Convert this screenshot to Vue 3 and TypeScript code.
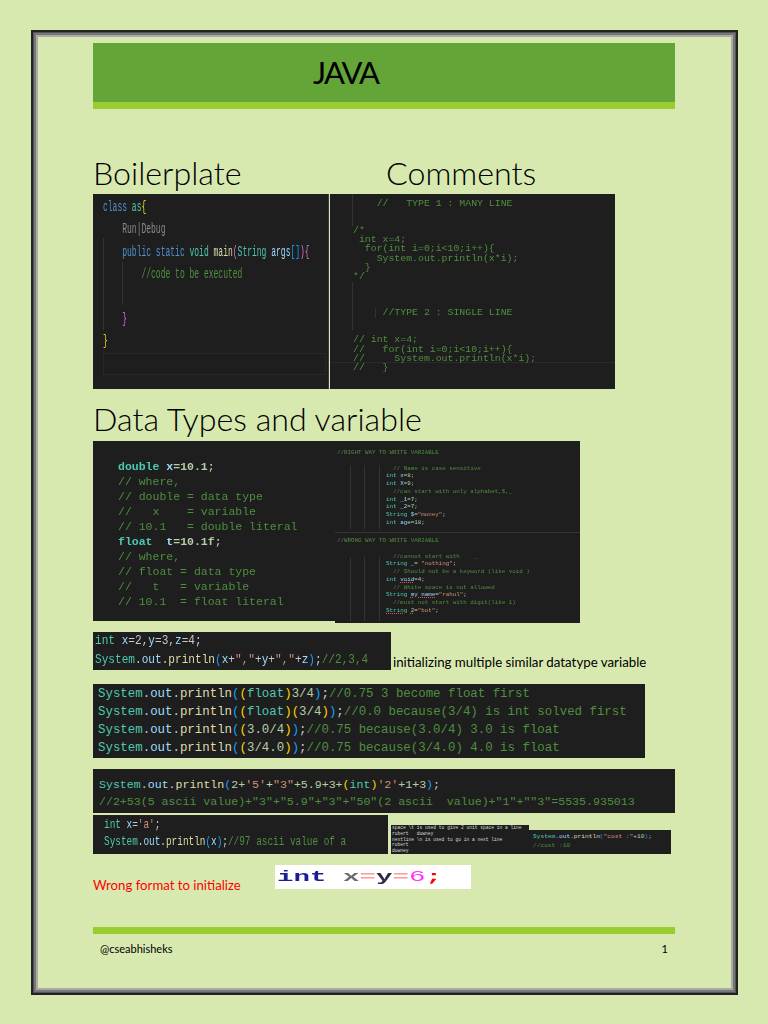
<script setup lang="ts">
type Token = [string, string?]
type Line = Token[]

const c = (text: string): Line => [[text, 'cm']]
const blank: Line = [[' ']]

const boiler: Line[] = [
  [['class', 'kw'], [' '], ['as', 'ty'], ['{', 'gold']],
  [['    '], ['Run|Debug', 'mute']],
  [['    '], ['public static', 'kw'], [' '], ['void', 'ty'], [' '], ['main', 'fn'], ['(', 'pur'], ['String', 'ty'], [' '], ['args', 'var'], ['[]', 'blu'], [')', 'pur'], ['{', 'pur']],
  [['        '], ['//code to be executed', 'cm']],
  blank,
  [['    '], ['}', 'pur']],
  [['}', 'gold']],
]

const comments: string[] = [
  '    //   TYPE 1 : MANY LINE', ' ', ' ',
  '/*', ' int x=4;', '  for(int i=0;i<10;i++){', '    System.out.println(x*i);', '  }', '*/',
  ' ', ' ', ' ',
  '     //TYPE 2 : SINGLE LINE', ' ', ' ',
  '// int x=4;', '//   for(int i=0;i<10;i++){', '//     System.out.println(x*i);', '//   }',
]

const types: Line[] = [
  [['double', 'ty'], [' '], ['x', 'var'], ['=10.1', 'num'], [';', 'fn']],
  c('// where,'),
  c('// double = data type'),
  c('//   x    = variable'),
  c('// 10.1   = double literal'),
  [['float', 'ty'], ['  '], ['t', 'var'], ['=10.1f', 'num'], [';', 'fn']],
  c('// where,'),
  c('// float = data type'),
  c('//   t   = variable'),
  c('// 10.1  = float literal'),
]

const ind = '              '
const right: Line[] = [
  c('//RIGHT WAY TO WRITE VARIABLE'),
  blank,
  c(ind + '  // Name is case sensitive'),
  [[ind], ['int', 'ty'], [' '], ['x', 'var'], ['=8;', 'num']],
  [[ind], ['int', 'ty'], [' '], ['X', 'var'], ['=9;', 'num']],
  c(ind + '  //can start with only alphabet,$,_'),
  [[ind], ['int', 'ty'], [' '], ['_1', 'var'], ['=7;', 'num']],
  [[ind], ['int', 'ty'], [' '], ['_2', 'var'], ['=7;', 'num']],
  [[ind], ['String', 'ty'], [' '], ['$', 'var'], ['='], ['"money"', 'str'], [';']],
  [[ind], ['int', 'ty'], [' '], ['age', 'var'], ['=18;', 'num']],
]

const wrong: Line[] = [
  c('//WRONG WAY TO WRITE VARIABLE'),
  blank,
  c(ind + '  //cannot start with    _'),
  [[ind], ['String', 'ty'], [' '], ['_', 'var'], ['= '], ['"nothing"', 'str'], [';']],
  c(ind + '  // Should not be a keyword (like void )'),
  [[ind], ['int', 'ty'], [' '], ['void', 'var err'], ['=4;', 'num']],
  c(ind + '  // White space is not allowed'),
  [[ind], ['String', 'ty'], [' '], ['my name', 'var err'], ['='], ['"rahul"', 'str'], [';']],
  c(ind + '  //must not start with digit(like 1)'),
  [[ind], ['String', 'ty err'], [' '], ['2', 'num err'], ['='], ['"bot"', 'str'], [';']],
]

const multi: Line[] = [
  [['int', 'ty'], [' '], ['x', 'var'], ['=2,'], ['y', 'var'], ['=3,'], ['z', 'var'], ['=4;']],
  [['System', 'ty'], ['.'], ['out', 'var'], ['.'], ['println', 'fn'], ['(', 'blu'], ['x', 'var'], ['+'], ['","', 'str'], ['+'], ['y', 'var'], ['+'], ['","', 'str'], ['+'], ['z', 'var'], [')', 'blu'], [';'], ['//2,3,4', 'cm']],
]

const pr: Token[] = [['System', 'ty'], ['.'], ['out', 'var'], ['.'], ['println', 'fn'], ['(', 'blu']]
const casts: Line[] = [
  [...pr, ['(', 'gold'], ['float', 'ty'], [')', 'gold'], ['3/4', 'num'], [')', 'blu'], [';'], ['//0.75 3 become float first', 'cm']],
  [...pr, ['(', 'gold'], ['float', 'ty'], [')', 'gold'], ['(', 'gold'], ['3/4', 'num'], [')', 'gold'], [')', 'blu'], [';'], ['//0.0 because(3/4) is int solved first', 'cm']],
  [...pr, ['(', 'gold'], ['3.0/4', 'num'], [')', 'gold'], [')', 'blu'], [';'], ['//0.75 because(3.0/4) 3.0 is float', 'cm']],
  [...pr, ['(', 'gold'], ['3/4.0', 'num'], [')', 'gold'], [')', 'blu'], [';'], ['//0.75 because(3/4.0) 4.0 is float', 'cm']],
]

const ascii: Line[] = [
  [...pr, ['2+', 'num'], ["'5'", 'str'], ['+'], ['"3"', 'str'], ['+5.9+3+', 'num'], ['(', 'gold'], ['int', 'ty'], [')', 'gold'], ["'2'", 'str'], ['+1+3', 'num'], [')', 'blu'], [';']],
  c('//2+53(5 ascii value)+"3"+"5.9"+"3"+"50"(2 ascii  value)+"1"+""3"=5535.935013'),
]

const charShot: Line[] = [
  [['int', 'ty'], [' '], ['x', 'var'], ['='], ["'a'", 'str'], [';']],
  [['System', 'ty'], ['.'], ['out', 'var'], ['.'], ['println', 'fn'], ['(', 'blu'], ['x', 'var'], [')', 'blu'], [';'], ['//97 ascii value of a', 'cm']],
]

const esc: string[] = [
  'space \\t is used to give 2 unit space in a line',
  'robert   downey',
  'nextline \\n is used to go in a next line',
  'robert',
  'downey',
]

const cost: Line[] = [
  [['System', 'ty'], ['.'], ['out', 'var'], ['.'], ['println', 'fn'], ['(', 'blu'], ['"cost :"', 'str'], ['+10', 'num'], [')', 'blu'], [';']],
  c('//cost :10'),
]
</script>

<template>
  <div class="page">
    <div class="frame">
      <header class="title"><h1>JAVA</h1></header>

      <div class="heads">
        <h2>Boilerplate</h2>
        <h2>Comments</h2>
      </div>

      <div class="row row-top">
        <div class="shot boiler">
          <i class="guide g1"></i>
          <i class="guide g2"></i>
          <i class="hl"></i>
          <pre class="code"><span v-for="(l, i) in boiler" :key="i" class="ln"><span v-for="(t, j) in l" :key="j" :class="t[1]">{{ t[0] }}</span></span></pre>
        </div>
        <div class="shot comments">
          <i class="guide c1"></i>
          <i class="guide c2"></i>
          <i class="guide c3"></i>
          <i class="rule"></i>
          <pre class="code"><span v-for="(l, i) in comments" :key="i" class="ln cm">{{ l }}</span></pre>
        </div>
      </div>

      <h2 class="sub">Data Types and variable</h2>

      <div class="row row-types">
        <div class="shot types">
          <pre class="code"><span v-for="(l, i) in types" :key="i" class="ln"><span v-for="(t, j) in l" :key="j" :class="t[1]">{{ t[0] }}</span></span></pre>
        </div>
        <div class="stack">
          <div class="shot tiny t-right">
            <i class="guide t1"></i>
            <i class="guide t2"></i>
            <i class="guide t3"></i>
            <pre class="code"><span v-for="(l, i) in right" :key="i" class="ln"><span v-for="(t, j) in l" :key="j" :class="t[1]">{{ t[0] }}</span></span></pre>
          </div>
          <div class="shot tiny t-wrong">
            <i class="guide t1"></i>
            <i class="guide t2"></i>
            <i class="guide t3"></i>
            <pre class="code"><span v-for="(l, i) in wrong" :key="i" class="ln"><span v-for="(t, j) in l" :key="j" :class="t[1]">{{ t[0] }}</span></span></pre>
          </div>
        </div>
      </div>

      <div class="row row-multi">
        <div class="shot multi">
          <pre class="code"><span v-for="(l, i) in multi" :key="i" class="ln"><span v-for="(t, j) in l" :key="j" :class="t[1]">{{ t[0] }}</span></span></pre>
        </div>
        <span class="note">initializing multiple similar datatype variable</span>
      </div>

      <div class="shot casts">
        <pre class="code"><span v-for="(l, i) in casts" :key="i" class="ln"><span v-for="(t, j) in l" :key="j" :class="t[1]">{{ t[0] }}</span></span></pre>
      </div>

      <div class="shot ascii">
        <pre class="code"><span v-for="(l, i) in ascii" :key="i" class="ln"><span v-for="(t, j) in l" :key="j" :class="t[1]">{{ t[0] }}</span></span></pre>
      </div>

      <div class="row row-char">
        <div class="shot char">
          <pre class="code"><span v-for="(l, i) in charShot" :key="i" class="ln"><span v-for="(t, j) in l" :key="j" :class="t[1]">{{ t[0] }}</span></span></pre>
        </div>
        <div class="shot esc">
          <pre class="code"><span v-for="(l, i) in esc" :key="i" class="ln">{{ l }}</span></pre>
        </div>
        <div class="shot cost">
          <pre class="code"><span v-for="(l, i) in cost" :key="i" class="ln"><span v-for="(t, j) in l" :key="j" :class="t[1]">{{ t[0] }}</span></span></pre>
        </div>
      </div>

      <div class="row row-wrong">
        <span class="bad">Wrong format to initialize</span>
        <div class="white">
          <span class="wide"><span class="w-int">int</span> <span class="w-x">x</span><span class="w-eq">=</span><span class="w-y">y</span><span class="w-eq">=</span><span class="w-six">6</span><span class="w-semi">;</span></span>
        </div>
      </div>

      <div class="foot-bar"></div>
      <footer class="foot">
        <span>@cseabhisheks</span>
        <span>1</span>
      </footer>
    </div>
  </div>
</template>

<style>
html,
body {
  margin: 0;
  background: #d8e9b0;
}
</style>

<style scoped>
.page {
  width: 768px;
  height: 1024px;
  box-sizing: border-box;
  padding: 30px 0 0 31px;
  background: #d8e9b0;
  font-family: Lato, "Open Sans", sans-serif;
  color: #000;
  overflow: hidden;
}
.frame {
  width: 707px;
  height: 965px;
  box-sizing: border-box;
  border: 2px solid #222;
  box-shadow: inset 0 0 0 1px #555, inset 0 0 0 3px #777, inset 0 0 0 5px #aaa;
  padding: 11px 61px 0 60px;
}
.title {
  height: 59px;
  border-bottom: 7px solid #9acd32;
  background: #63a537;
  display: flex;
  align-items: center;
  padding-left: 220px;
}
h1 {
  margin: 0;
  font-size: 31px;
  font-weight: 400;
  line-height: 1;
  letter-spacing: -1.8px;
}
h2 {
  margin: 0;
  font-size: 32.2px;
  font-weight: 300;
  line-height: 38px;
}
.heads {
  margin-top: 45px;
  margin-bottom: 2px;
  display: grid;
  grid-template-columns: 293px 1fr;
}
.row {
  display: flex;
}
.sub {
  margin-top: 11px;
  margin-bottom: 3px;
}
.shot {
  position: relative;
  box-sizing: border-box;
  background: #1e1e1e;
  overflow: hidden;
  flex: none;
}
.code {
  margin: 0;
  font-family: "Liberation Mono", monospace;
  color: #c8c8c8;
  transform-origin: 0 0;
}
.ln {
  display: block;
  white-space: pre;
}

.cm { color: #4f8f3f; }
.kw { color: #4f92cf; }
.ty { color: #4ec9b0; }
.fn { color: #dcdcaa; }
.var { color: #9cdcfe; }
.num { color: #b5cea8; }
.str { color: #ce9178; }
.gold { color: #ffd700; }
.pur { color: #da70d6; }
.blu { color: #179fff; }
.mute { color: #8a8a8a; }
.err {
  text-decoration: underline dotted #f14c4c 0.6px;
}

.boiler {
  width: 236px;
  height: 195px;
  padding: 2px 0 0 10px;
  border-right: 1px solid #3d3d3d;
}
.boiler .code {
  font-size: 14px;
  line-height: 22.4px;
  transform: scaleX(0.572);
}
.guide {
  position: absolute;
  width: 1px;
  background: #333;
}
.g1 { left: 10px; top: 44px; height: 92px; }
.g2 { left: 29px; top: 68px; height: 43px; }
.hl {
  position: absolute;
  left: 10px;
  top: 159px;
  width: 223px;
  height: 22px;
  border: 1px solid #272727;
  box-sizing: border-box;
}
.comments {
  width: 285px;
  height: 195px;
  margin-left: 1px;
  padding: 5px 0 0 23px;
}
.comments .code {
  font-size: 9.85px;
  line-height: 9.1px;
  filter: blur(0.4px);
}
.c1 { left: 22px; top: 0; height: 32px; }
.c2 { left: 22px; top: 88px; height: 48px; }
.c3 { left: 45px; top: 114px; height: 10px; }
.rule {
  position: absolute;
  left: 0;
  right: 0;
  top: 168px;
  height: 1px;
  background: #2a2a2a;
}
.types {
  width: 242px;
  height: 180px;
  padding: 18px 0 0 25px;
}
.types .code {
  font-size: 11.5px;
  line-height: 15px;
  filter: blur(0.2px);
}
.types .ty,
.types .var,
.types .num {
  font-weight: 700;
}
.stack {
  width: 245px;
  display: flex;
  flex-direction: column;
}
.tiny {
  height: 91px;
  padding-left: 2px;
}
.tiny .code {
  font-size: 5.85px;
  line-height: 7.75px;
  filter: blur(0.25px);
}
.t-right { padding-top: 8px; }
.t-wrong {
  padding-top: 4px;
  border-top: 1px solid #333;
}
.t1 { left: 15px; top: 24px; height: 64px; }
.t2 { left: 29px; top: 24px; height: 64px; }
.t3 { left: 44px; top: 24px; height: 64px; }

.row-multi {
  margin-top: 9px;
  align-items: flex-end;
}
.multi {
  width: 298px;
  height: 38px;
  padding: 0 0 0 2px;
}
.multi .code {
  font-size: 13.3px;
  line-height: 19px;
  margin-top: -1px;
  transform: scaleX(0.835);
}
.note {
  margin-left: 2px;
  font-size: 13.3px;
  line-height: 15px;
}
.casts {
  margin-top: 14px;
  width: 552px;
  height: 74px;
  padding: 1px 0 0 5px;
}
.casts .code {
  font-size: 12.42px;
  line-height: 18px;
}
.ascii {
  margin-top: 11px;
  width: 582px;
  height: 44px;
  padding: 7px 0 0 6px;
}
.ascii .code {
  font-size: 11.6px;
  line-height: 17px;
}
.row-char {
  margin-top: 2px;
  align-items: flex-end;
}
.char {
  width: 295px;
  height: 39px;
  padding: 1px 0 0 11px;
}
.char .code {
  font-size: 13px;
  line-height: 17px;
  transform: scaleX(0.722);
}
.esc {
  margin-left: 3px;
  width: 138px;
  height: 29px;
  padding-left: 1px;
}
.esc .code {
  font-size: 4.6px;
  line-height: 5.8px;
  color: #d8d8d8;
}
.cost {
  width: 142px;
  height: 24px;
  padding: 2px 0 0 4px;
}
.cost .code {
  font-size: 6.2px;
  line-height: 9px;
}
.row-wrong {
  margin-top: 11px;
  height: 24px;
}
.bad {
  align-self: flex-end;
  width: 182px;
  color: #f00;
  font-size: 13.2px;
  line-height: 15px;
  margin-bottom: -4px;
}
.white {
  width: 196px;
  height: 24px;
  background: #fff;
  overflow: hidden;
  padding-left: 2px;
  box-sizing: border-box;
}
.wide {
  display: block;
  font-family: "Liberation Mono", monospace;
  font-weight: 700;
  font-size: 15px;
  line-height: 26px;
  white-space: pre;
  transform: scaleX(1.83);
  transform-origin: 0 0;
}
.w-int { color: #1c1c96; }
.w-x { color: #6c6c6c; }
.w-eq { color: #ff9a9a; }
.w-y { color: #2c2c50; }
.w-six { color: #ff30ff; font-weight: 400; }
.w-semi { color: #f00; }
.foot-bar {
  margin-top: 38px;
  height: 7px;
  background: #9acd32;
}
.foot {
  margin-top: 8px;
  padding: 0 7px;
  display: flex;
  justify-content: space-between;
  font-size: 11px;
  line-height: 14px;
}
</style>
